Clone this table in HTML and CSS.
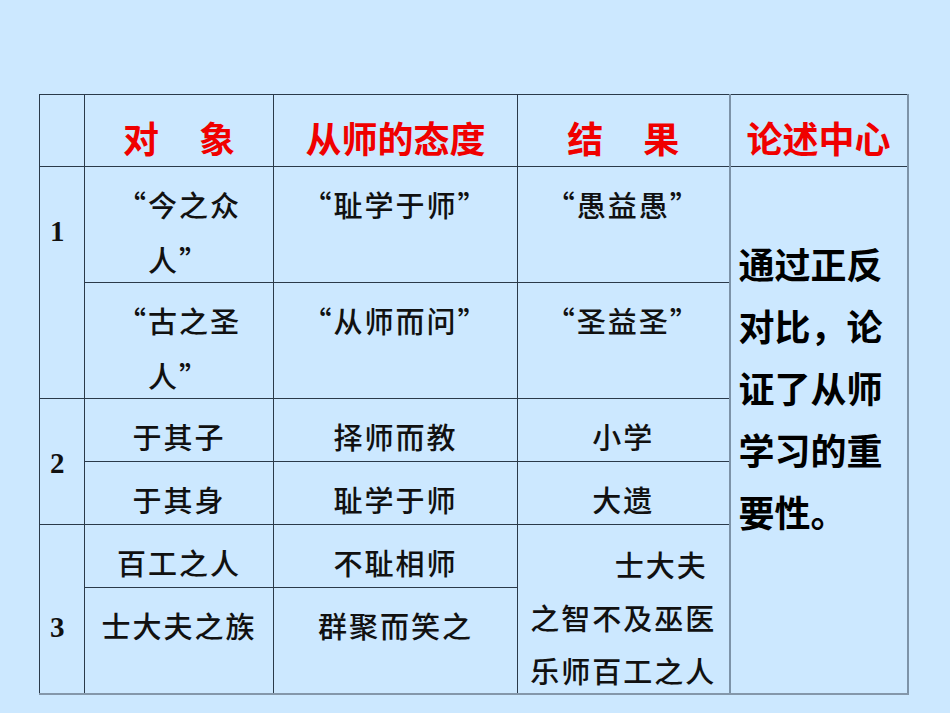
FILE: index.html
```html
<!DOCTYPE html>
<html lang="zh-CN">
<head>
<meta charset="utf-8">
<title>从师的态度</title>
<link rel="stylesheet" href="styles.css">
</head>
<body>
<div class="page">
  <table class="grid">
    <colgroup>
      <col class="c-num">
      <col class="c-obj">
      <col class="c-att">
      <col class="c-res">
      <col class="c-cen">
    </colgroup>
    <tr class="r-head">
      <td class="head"></td>
      <td class="head">对<span class="gap"></span>象</td>
      <td class="head">从师的态度</td>
      <td class="head">结<span class="gap"></span>果</td>
      <td class="head last">论述中心</td>
    </tr>
    <tr class="r-tall">
      <td class="num n1" rowspan="2">1</td>
      <td class="txt"><div class="lines">“今之众<br>人”</div></td>
      <td class="txt"><div class="lines">“耻学于师”</div></td>
      <td class="txt"><div class="lines">“愚益愚”</div></td>
      <td class="center last" rowspan="6">通过正反<br>对比，论<br>证了从师<br>学习的重<br>要性。</td>
    </tr>
    <tr class="r-tall">
      <td class="txt"><div class="lines">“古之圣<br>人”</div></td>
      <td class="txt"><div class="lines">“从师而问”</div></td>
      <td class="txt"><div class="lines">“圣益圣”</div></td>
    </tr>
    <tr class="r-short">
      <td class="num n2" rowspan="2">2</td>
      <td class="txt"><div class="lines">于其子</div></td>
      <td class="txt"><div class="lines">择师而教</div></td>
      <td class="txt"><div class="lines">小学</div></td>
    </tr>
    <tr class="r-short">
      <td class="txt"><div class="lines">于其身</div></td>
      <td class="txt"><div class="lines">耻学于师</div></td>
      <td class="txt"><div class="lines">大遗</div></td>
    </tr>
    <tr class="r-short">
      <td class="num n3 bottom" rowspan="2">3</td>
      <td class="txt"><div class="lines">百工之人</div></td>
      <td class="txt"><div class="lines">不耻相师</div></td>
      <td class="txt bottom" rowspan="2"><div class="lines tight"><span class="first">士大夫</span><br>之智不及巫医<br>乐师百工之人</div></td>
    </tr>
    <tr class="r-end">
      <td class="txt bottom"><div class="lines">士大夫之族</div></td>
      <td class="txt bottom"><div class="lines">群聚而笑之</div></td>
    </tr>
  </table>
</div>
</body>
</html>
```

FILE: styles.css
```css
html, body {
  margin: 0;
  padding: 0;
  background: #cce8ff;
}

.page {
  width: 950px;
  height: 713px;
  box-sizing: border-box;
  padding: 94px 0 0 39px;
  background: #cce8ff;
  overflow: hidden;
}

.grid {
  border-collapse: collapse;
  table-layout: fixed;
  width: 869px;
}

.c-num { width: 45px; }
.c-obj { width: 189px; }
.c-att { width: 244px; }
.c-res { width: 212px; }
.c-cen { width: 178px; }

.r-head { height: 72px; }
.r-tall { height: 116px; }
.r-short { height: 63px; }
.r-end { height: 106px; }

.grid td {
  border: 1px solid #2a3a4a;
  padding: 0;
  vertical-align: top;
  box-sizing: border-box;
}

.grid td.last {
  border-left: 2px solid #7d93a8;
  border-right: 2px solid #7d93a8;
}

.grid td.bottom,
.grid td.center {
  border-bottom: 2px solid #8497aa;
}

.head {
  font-family: "Noto Sans CJK SC", sans-serif;
  font-weight: 700;
  font-size: 36px;
  line-height: 44px;
  color: #f00000;
  text-align: center;
  padding-top: 20px !important;
  white-space: nowrap;
}

.gap {
  display: inline-block;
  width: 40px;
}

.num {
  font-family: "Liberation Serif", "Times New Roman", serif;
  font-weight: 700;
  font-size: 29px;
  line-height: 32px;
  color: #111;
  text-align: left;
  padding-left: 10px !important;
}

.n1 { padding-top: 48px !important; }
.n2 { padding-top: 48px !important; }
.n3 { padding-top: 86px !important; }

.txt {
  font-family: "Noto Sans CJK SC", sans-serif;
  font-weight: 500;
  font-size: 29px;
  line-height: 55px;
  letter-spacing: 2px;
  color: #111;
  text-align: center;
  padding-top: 10px !important;
  white-space: nowrap;
}

.lines {
  margin-bottom: -60px;
}

.lines.tight {
  line-height: 53px;
  padding-top: 3px;
}

.first {
  display: inline-block;
  padding-left: 76px;
}

.center {
  font-family: "Noto Sans CJK SC", sans-serif;
  font-weight: 700;
  font-size: 36px;
  line-height: 62px;
  color: #000;
  text-align: left;
  padding: 65px 0 0 8px !important;
  white-space: nowrap;
}
```
